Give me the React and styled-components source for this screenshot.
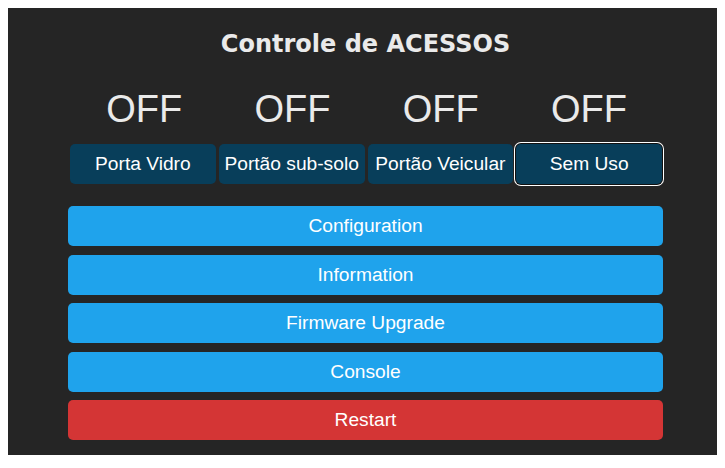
import React from "react";
import styled, { createGlobalStyle } from "styled-components";

// === STYLES ===

const GlobalStyle = createGlobalStyle`
  body {
    margin: 8px;
    background: #ffffff;
    font-family: "DejaVu Sans", Verdana, sans-serif;
  }
`;

const Panel = styled.div`
  background: #252525;
  color: #eaeaea;
  padding: 22px 53px 15px 60px;
  box-sizing: border-box;
`;

const Content = styled.div`
  width: 595px;
`;

const Title = styled.h2`
  margin: 0;
  font-size: 24px;
  font-weight: bold;
  line-height: 28px;
  text-align: center;
  color: #eaeaea;
`;

const StateRow = styled.div`
  display: grid;
  grid-template-columns: repeat(4, 1fr);
  margin-top: 29px;
  padding-left: 2px;
`;

const State = styled.div`
  font-family: "Liberation Sans", Arial, sans-serif;
  font-size: 38px;
  line-height: 44px;
  text-align: center;
  color: #eaeaea;
`;

const ToggleRow = styled.div`
  display: grid;
  grid-template-columns: repeat(4, 1fr);
  gap: 3px;
  margin: 13px 1px 0 2px;
`;

const Toggle = styled.button`
  height: 40px;
  border: 0;
  border-radius: 5px;
  background: #083e5a;
  color: #ffffff;
  font-family: "Liberation Sans", Arial, sans-serif;
  font-size: 19.2px;
  padding: 0;
  white-space: nowrap;
  cursor: pointer;
  box-shadow: ${(p) => (p.$focused ? "0 0 0 1px #111, 0 0 0 2px #ffffff" : "none")};
`;

const Menu = styled.div`
  display: flex;
  flex-direction: column;
  gap: 8.5px;
  margin-top: 22px;
`;

const MenuButton = styled.button`
  width: 100%;
  height: 40px;
  border: 0;
  border-radius: 5px;
  background: ${(p) => (p.$danger ? "#d43535" : "#1fa3ec")};
  color: #ffffff;
  font-family: "Liberation Sans", Arial, sans-serif;
  font-size: 19.2px;
  padding: 0;
  cursor: pointer;
`;

const states = ["OFF", "OFF", "OFF", "OFF"];
const toggles = ["Porta Vidro", "Portão sub-solo", "Portão Veicular", "Sem Uso"];
const menu = ["Configuration", "Information", "Firmware Upgrade", "Console"];

const App = () => {
  return (
    <>
      <GlobalStyle />
      <Panel>
        <Content>
          <Title>Controle de ACESSOS</Title>

          <StateRow>
            {states.map((s, i) => (
              <State key={i}>{s}</State>
            ))}
          </StateRow>

          <ToggleRow>
            {toggles.map((t, i) => (
              <Toggle key={t} $focused={i === 3}>
                {t}
              </Toggle>
            ))}
          </ToggleRow>

          <Menu>
            {menu.map((m) => (
              <MenuButton key={m}>{m}</MenuButton>
            ))}
            <MenuButton $danger>Restart</MenuButton>
          </Menu>
        </Content>
      </Panel>
    </>
  );
};

export default App;
